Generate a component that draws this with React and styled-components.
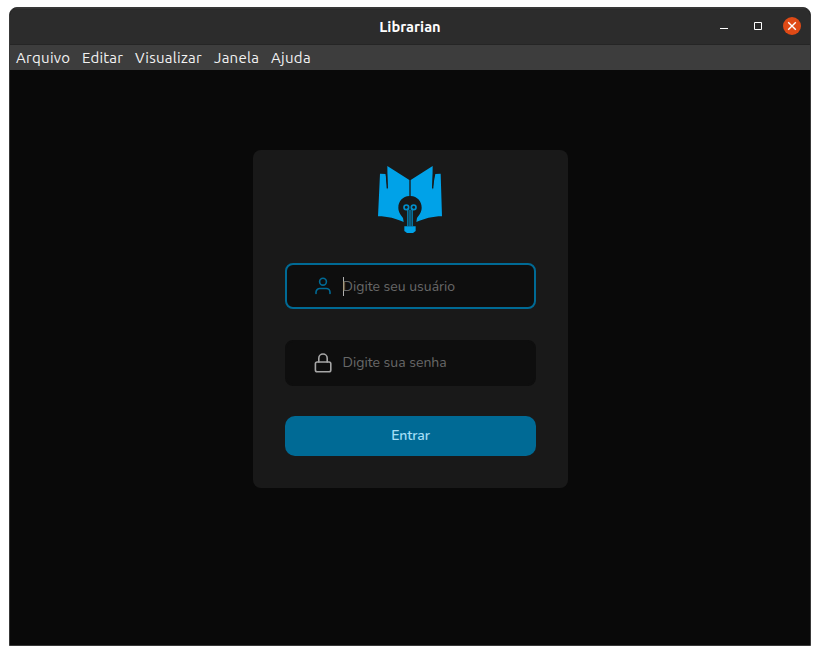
import React from "react";
import styled, { createGlobalStyle } from "styled-components";

const GlobalStyle = createGlobalStyle`
  * { box-sizing: border-box; }
  body { margin: 0; background: #fff; overflow: hidden; font-family: Ubuntu, "Noto Sans", sans-serif; }
`;

const Page = styled.div`
  width: 820px;
  height: 655px;
  padding: 7px 9px 9px;
`;

const Window = styled.div`
  display: flex;
  flex-direction: column;
  width: 802px;
  height: 639px;
  border: 1px solid #383838;
  border-radius: 8px 8px 0 0;
  background: #090909;
  overflow: hidden;
`;

const TitleBar = styled.header`
  display: grid;
  grid-template-columns: 1fr auto 1fr;
  align-items: center;
  flex: none;
  height: 37px;
  background: #2c2c2c;
  border-top: 1px solid #353535;
  border-bottom: 1px solid #252525;
`;

const Title = styled.h1`
  grid-column: 2;
  margin: 0;
  color: #fff;
  font-size: 14.667px;
  line-height: 20px;
  font-weight: 700;
`;

const Controls = styled.div`
  display: flex;
  justify-content: flex-end;
  align-items: center;
  gap: 16px;
  padding: 0 9px 2px 0;
`;

const Control = styled.button`
  display: flex;
  width: 18px;
  height: 18px;
  padding: 0;
  border: 0;
  border-radius: 50%;
  background: ${({ $close }) => ($close ? "#df4a16" : "transparent")};
`;

const MenuBar = styled.nav`
  display: flex;
  flex: none;
  gap: 12px;
  height: 25px;
  padding-left: 6px;
  background: #3d3d3d;
`;

const MenuItem = styled.span`
  width: ${({ $width }) => $width}px;
  color: #f2f2f2;
  font-size: 15px;
  line-height: 25px;
  white-space: nowrap;
  letter-spacing: ${({ $spacing }) => $spacing}px;
`;

const Content = styled.main`
  display: flex;
  flex: 1;
  justify-content: center;
  align-items: flex-start;
  padding-top: 80px;
`;

const Card = styled.form`
  display: flex;
  flex-direction: column;
  align-items: center;
  width: 315px;
  height: 338px;
  margin-left: 1px;
  padding: 8px 32px 32px;
  border-radius: 8px;
  background: #191919;
`;

const Logo = styled.svg`
  flex: none;
  width: 80px;
  height: 80px;
  margin: 0 1px 25px 0;
`;

const Field = styled.label`
  display: flex;
  align-items: center;
  flex: none;
  width: 251px;
  height: 46px;
  margin-bottom: ${({ $gap }) => $gap}px;
  padding-left: 26px;
  border: 2px solid ${({ $focused }) => ($focused ? "#006a95" : "#0e0e0e")};
  border-radius: 8px;
  background: #0e0e0e;
  color: ${({ $focused }) => ($focused ? "#006a95" : "#a6a6a6")};
`;

const FieldIcon = styled.svg`
  width: 20px;
  height: 20px;
  margin-right: 10px;
  fill: none;
  stroke: currentColor;
  stroke-width: 1.6;
  stroke-linecap: round;
  stroke-linejoin: round;
`;

const Caret = styled.span`
  width: 1px;
  height: 19px;
  margin-right: -1px;
  background: #b0b0b0;
`;

const Placeholder = styled.span`
  padding-top: ${({ $drop = 0 }) => $drop}px;
  margin-left: -0.4px;
  color: #686868;
  font-family: Nunito, "Noto Sans", sans-serif;
  font-size: 14px;
  font-weight: 400;
  line-height: 20px;
  white-space: nowrap;
`;

const Submit = styled.button`
  flex: none;
  width: 251px;
  height: 40px;
  padding: 0 0 1px;
  border: 0;
  border-radius: 10px;
  background: #006a95;
  color: #a4def5;
  font: 600 14px/19px Nunito, "Noto Sans", sans-serif;
  letter-spacing: -0.1px;
`;

const menus = [
  ["Arquivo", 54, 0.28],
  ["Editar", 41, 0.2],
  ["Visualizar", 67, 0.28],
  ["Janela", 45, 0.25],
  ["Ajuda", 40, 0.3],
];

function BookLogo() {
  return (
    <Logo viewBox="0 0 240 240" aria-label="Librarian">
      <g fill="#00a2e8">
        <path d="M52 24L118 66V114C98 115 85 130 85 149C85 164 94 172 99 180L101 192C78 182 54 175 24 175L30 47L47 48L53 95Z" />
        <path d="M188 24L122 66V114C142 115 155 130 155 149C155 164 146 172 141 180L139 192C163 182 187 175 216 175L212 47L196 48L187 95Z" />
        <path d="M103 205H137V219L129 225H111L103 219Z" />
      </g>
      <path d="M49 46L52 91M191 46L188 91" stroke="#191919" strokeWidth="4" />
      <g fill="none" stroke="#008fcc" strokeWidth="5">
        <circle cx="109" cy="148" r="7" />
        <circle cx="131" cy="148" r="7" />
        <path d="M113.5 151V205M120 155V205M126.5 151V205" strokeWidth="3.6" />
      </g>
    </Logo>
  );
}

export default function App() {
  return (
    <>
      <GlobalStyle />
      <Page>
        <Window>
          <TitleBar>
            <Title>Librarian</Title>
            <Controls>
              <Control aria-label="Minimizar">
                <svg width="18" height="18"><path d="M5 11.5h8" stroke="#fff" /></svg>
              </Control>
              <Control aria-label="Maximizar">
                <svg width="18" height="18"><path d="M5.5 5.5h7v7h-7z" fill="none" stroke="#fff" /></svg>
              </Control>
              <Control $close aria-label="Fechar">
                <svg width="18" height="18"><path d="M5.2 5.2l7.6 7.6m0-7.6l-7.6 7.6" stroke="#fff" strokeWidth="1.4" /></svg>
              </Control>
            </Controls>
          </TitleBar>
          <MenuBar>
            {menus.map(([name, width, spacing]) => (
              <MenuItem key={name} $width={width} $spacing={spacing}>{name}</MenuItem>
            ))}
          </MenuBar>
          <Content>
            <Card onSubmit={(event) => event.preventDefault()}>
              <BookLogo />
              <Field $focused $gap={31}>
                <FieldIcon viewBox="0 0 20 20">
                  <circle cx="10" cy="5.7" r="3.4" />
                  <path d="M3 17.5v-1.2a3.8 3.8 0 0 1 3.8-3.8h6.4a3.8 3.8 0 0 1 3.8 3.8v1.2" />
                </FieldIcon>
                <Caret />
                <Placeholder $drop={2}>Digite seu usuário</Placeholder>
              </Field>
              <Field $gap={30}>
                <FieldIcon viewBox="0 0 20 20">
                  <rect x="2.4" y="9" width="15.4" height="9.7" rx="1.8" />
                  <path d="M5.8 9V5.2a4.2 4.2 0 0 1 8.4 0V9" />
                </FieldIcon>
                <Placeholder>Digite sua senha</Placeholder>
              </Field>
              <Submit type="submit">Entrar</Submit>
            </Card>
          </Content>
        </Window>
      </Page>
    </>
  );
}
